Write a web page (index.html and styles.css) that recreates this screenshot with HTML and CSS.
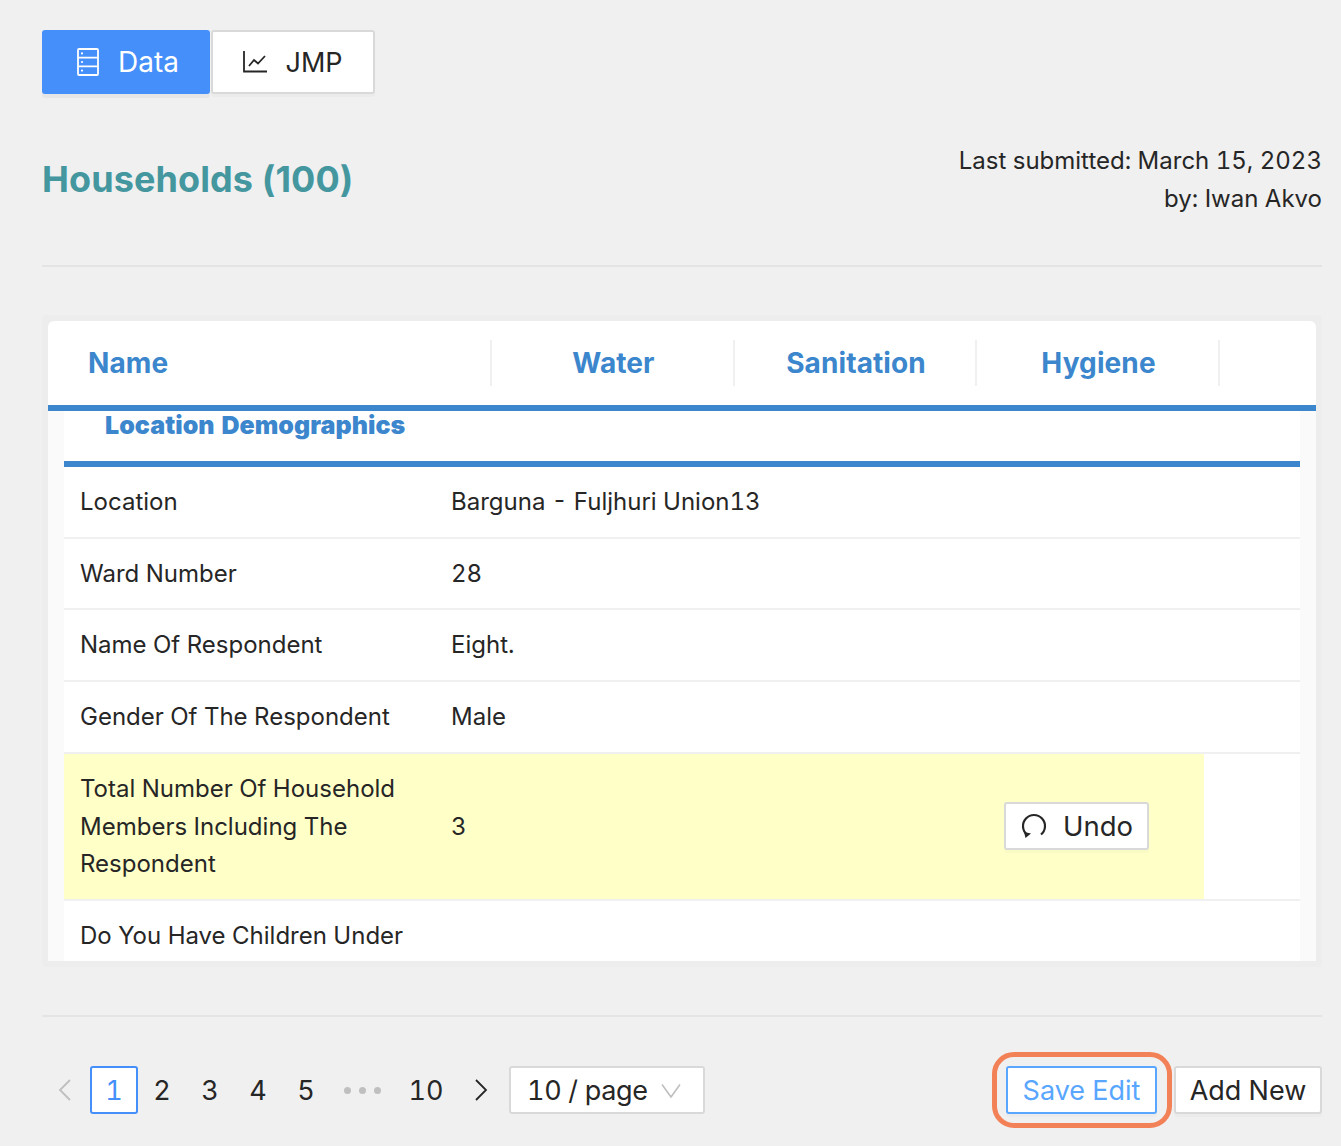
FILE: index.html
```html
<!DOCTYPE html>
<html lang="en">
<head>
<meta charset="utf-8">
<title>Households</title>
<link rel="stylesheet" href="styles.css">
</head>
<body>
<main class="page">
  <nav class="tabs">
    <button class="tab tab-active">
      <svg class="icon-data" viewBox="0 0 22 28" fill="none" stroke="currentColor" stroke-width="1.8"><rect x="1" y="1" width="20" height="26" rx="1"/><path d="M1 9.700h20M1 18.300h20"/><circle cx="5" cy="5.400" r="1.100" fill="currentColor" stroke="none"/><circle cx="5" cy="14" r="1.100" fill="currentColor" stroke="none"/><circle cx="5" cy="22.600" r="1.100" fill="currentColor" stroke="none"/></svg>
      <span>Data</span>
    </button>
    <button class="tab tab-plain">
      <svg class="icon-chart" viewBox="0 0 24 24" fill="none" stroke="currentColor" stroke-width="1.8"><path d="M1 1v20.500h23"/><path d="M6 16l5-6 4 3.500 7-7.500"/></svg>
      <span>JMP</span>
    </button>
  </nav>

  <header class="head">
    <h1 class="title">Households (100)</h1>
    <div class="meta">Last submitted: March 15, 2023<br>by: Iwan Akvo</div>
  </header>

  <hr class="rule">

  <section class="card-wrap">
    <div class="card">
      <div class="columns">
        <div class="col col-name">Name</div>
        <div class="col">Water</div>
        <div class="col">Sanitation</div>
        <div class="col">Hygiene</div>
      </div>
      <div class="body">
        <h2 class="section">Location Demographics</h2>
        <div class="row"><div class="label">Location</div><div class="value">Barguna - Fuljhuri Union13</div></div>
        <div class="row"><div class="label">Ward Number</div><div class="value">28</div></div>
        <div class="row"><div class="label">Name Of Respondent</div><div class="value">Eight.</div></div>
        <div class="row"><div class="label">Gender Of The Respondent</div><div class="value">Male</div></div>
        <div class="row row-edited">
          <div class="edited">
            <div class="label">Total Number Of Household Members Including The Respondent</div>
            <div class="value">3</div>
            <button class="undo">
              <svg class="undo-icon" viewBox="0 0 26 26" fill="none" stroke="currentColor" stroke-width="2.2"><path d="M6 21.500A11 11 0 1 1 20 21.500"/><path d="M3 19l7 1.500-5.500 4.500z" fill="currentColor" stroke="none"/></svg>
              <span>Undo</span>
            </button>
          </div>
        </div>
        <div class="row"><div class="label">Do You Have Children Under</div></div>
      </div>
    </div>
  </section>

  <hr class="rule rule-bottom">

  <footer class="foot">
    <div class="pager">
      <svg class="arrow arrow-off" viewBox="0 0 14 24" fill="none" stroke="currentColor" stroke-width="1.8"><path d="M12 2L2 12l10 10"/></svg>
      <span class="page-no page-on">1</span>
      <span class="page-no">2</span>
      <span class="page-no">3</span>
      <span class="page-no">4</span>
      <span class="page-no">5</span>
      <span class="dots"><i></i><i></i><i></i></span>
      <span class="page-no page-last">10</span>
      <svg class="arrow" viewBox="0 0 14 24" fill="none" stroke="currentColor" stroke-width="1.8"><path d="M2 2l10 10L2 22"/></svg>
      <div class="select">
        <span>10 / page</span>
        <svg class="chev" viewBox="0 0 20 15" fill="none" stroke="currentColor" stroke-width="1.600"><path d="M1 1.500L10 14l9-12.500"/></svg>
      </div>
    </div>
    <div class="actions">
      <div class="callout"><button class="btn btn-save">Save Edit</button></div>
      <button class="btn btn-add">Add New</button>
    </div>
  </footer>
</main>
</body>
</html>
```
FILE: styles.css
```css
* { box-sizing: border-box; }
html, body { margin: 0; height: 100%; }
body {
  background: #f0f0f0;
  color: #262626;
  font-family: Inter, "Liberation Sans", sans-serif;
  font-size: 24px;
  font-variant-numeric: tabular-nums;
  overflow: hidden;
}
button { font: inherit; font-variant-numeric: tabular-nums; color: inherit; cursor: pointer; }
.page { padding: 30px 19px 0 42px; width: 1341px; height: 1146px; overflow: hidden; }

.tabs { display: flex; height: 64px; }
.tab {
  display: flex; align-items: center; justify-content: center; gap: 18px;
  padding: 0; border-radius: 3px;
}
.tab-active {
  width: 168px; padding-left: 4px; gap: 19px;
  background: #458ffa; border: 2px solid #458ffa; color: #fff;
  font-size: 28px;
  box-shadow: 0 4px 0 rgba(0,0,0,.04);
}
.tab-plain {
  width: 164px; margin-left: 1px;
  background: #fff; border: 2px solid #d9d9d9;
  font-size: 27px;
  box-shadow: 0 3px 0 rgba(0,0,0,.02);
}
.icon-data { width: 22px; height: 28px; flex: none; }
.icon-chart { width: 24px; height: 24px; flex: none; }

.head { display: flex; justify-content: space-between; margin-top: 48px; height: 123px; }
.title {
  margin: 0; padding-top: 15px;
  color: #45979f; font-size: 36px; line-height: 44px; font-weight: 700;
  font-variant-numeric: normal; letter-spacing: .1px;
}
.meta { text-align: right; line-height: 38px; }

.rule { margin: 0; border: 0; height: 2px; background: #e4e4e4; }

.card-wrap { margin-top: 48px; padding: 6px; width: 1280px; height: 652px; background: #ededed; border-radius: 4px; }
.card {
  height: 640px; border-radius: 6px 6px 0 0; overflow: hidden;
  background: linear-gradient(#fff, #fff) top / 100% 90px no-repeat, #fafafa;
}
.columns {
  display: grid; grid-template-columns: 444px 243px 242px 243px 1fr;
  height: 90px; padding-top: 19px;
  border-bottom: 6px solid #3b86cc;
  color: #3b86cc; font-size: 28px; font-weight: 700; letter-spacing: .1px;
}
.col { display: flex; align-items: center; justify-content: center; height: 46px; padding-left: 2px; border-right: 2px solid #f0f0f0; }
.col-name { justify-content: flex-start; padding-left: 40px; }
.body { margin: 0 16px; background: #fff; }
.section {
  margin: 0; height: 56px; padding-left: 41px;
  border-bottom: 6px solid #3b86cc;
  color: #3b86cc; font-size: 25px; line-height: 29px; font-weight: 900; letter-spacing: .05px;
}
.row {
  display: flex; align-items: center;
  padding: 16px 0 16px 16px;
  border-bottom: 2px solid #f0f0f0;
  line-height: 37.700px;
}
.label { width: 371px; padding-right: 16px; flex: none; }
.value { flex: 1; }
.row-edited { padding: 0; }
.edited { display: flex; align-items: center; width: 1140px; padding: 16px 0 16px 16px; background: #ffffc8; }
.undo {
  display: flex; align-items: center; gap: 16px;
  width: 145px; height: 48px; margin-right: 55px; padding: 0 0 0 15px;
  background: #fff; border: 2px solid #d9d9d9; border-radius: 3px;
  font-size: 27.500px; box-shadow: 0 3px 0 rgba(0,0,0,.02);
}
.undo-icon { width: 26px; height: 26px; flex: none; }

.rule-bottom { margin-top: 48px; }
.foot { display: flex; justify-content: space-between; align-items: center; margin-top: 49px; height: 48px; }
.pager { display: flex; align-items: center; margin-left: 16px; font-size: 27px; }
.arrow { width: 14px; height: 24px; flex: none; margin-right: 21px; }
.arrow-off { color: #bfbfbf; margin-right: 18px; }
.page-no { width: 48px; height: 48px; display: flex; align-items: center; justify-content: center; }
.page-on { color: #458ffa; background: #fff; border: 2px solid #458ffa; border-radius: 3px; }
.page-last { margin-right: 24px; }
.dots { display: flex; gap: 8px; width: 72px; padding-left: 14px; }
.dots i { width: 7px; height: 7px; border-radius: 50%; background: #bfbfbf; }
.select {
  display: flex; align-items: center; justify-content: space-between;
  width: 196px; height: 48px; padding: 0 22px 0 16px;
  background: #fff; border: 2px solid #d9d9d9; border-radius: 3px;
  letter-spacing: -.3px;
}
.chev { width: 20px; height: 15px; color: #bfbfbf; flex: none; }
.actions { display: flex; align-items: center; }
.callout { position: relative; margin-right: 17px; }
.callout::after {
  content: ""; position: absolute; inset: -14px -15px -14px -14px;
  border: 5px solid #f38157; border-radius: 22px; pointer-events: none;
}
.btn {
  display: block; height: 48px; padding: 0; background: #fff;
  border: 2px solid #d9d9d9; border-radius: 3px;
  font-size: 27px; white-space: nowrap; box-shadow: 0 3px 0 rgba(0,0,0,.02);
}
.btn-save { width: 151px; color: #58a6ff; border-color: #58a6ff; }
.btn-add { width: 148px; }
```
